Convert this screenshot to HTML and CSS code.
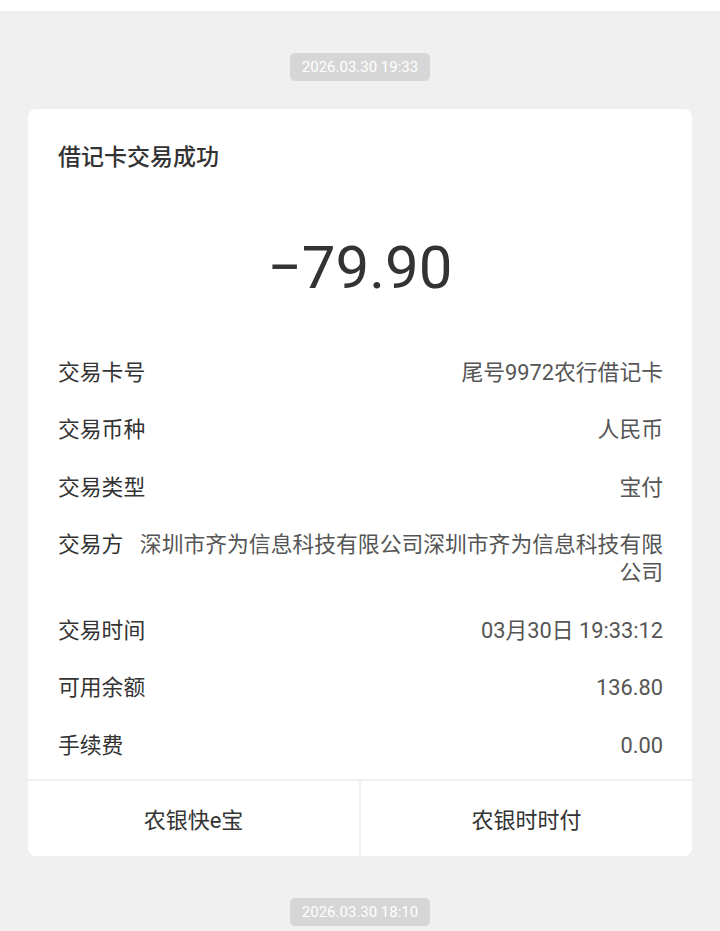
FILE: index.html
```html
<!DOCTYPE html>
<html>
<head>
<meta charset="utf-8">
<title>交易通知</title>
<link rel="stylesheet" href="styles.css">
</head>
<body>

<div class="topbar"></div>

<div class="feed">
  <div class="stamp"><span>2026.03.30 19:33</span></div>

  <div class="card">
    <div class="card-title">借记卡交易成功</div>
    <div class="amount">−79.90</div>

    <div class="rows">
      <div class="row">
        <span class="label">交易卡号</span>
        <span class="value">尾号9972农行借记卡</span>
      </div>
      <div class="row">
        <span class="label">交易币种</span>
        <span class="value">人民币</span>
      </div>
      <div class="row">
        <span class="label">交易类型</span>
        <span class="value">宝付</span>
      </div>
      <div class="row">
        <span class="label">交易方</span>
        <span class="value">深圳市齐为信息科技有限公司深圳市齐为信息科技有限公司</span>
      </div>
      <div class="row">
        <span class="label">交易时间</span>
        <span class="value">03月30日 19:33:12</span>
      </div>
      <div class="row">
        <span class="label">可用余额</span>
        <span class="value">136.80</span>
      </div>
      <div class="row">
        <span class="label">手续费</span>
        <span class="value">0.00</span>
      </div>
    </div>

    <div class="actions">
      <button class="action">农银快e宝</button>
      <button class="action">农银时时付</button>
    </div>
  </div>

  <div class="stamp"><span>2026.03.30 18:10</span></div>
</div>

</body>
</html>
```

FILE: styles.css
```css
body {
  margin: 0;
  background-color: #f0f0f0;
  font-family: Roboto, "Noto Sans CJK SC", sans-serif;
  color: #333;
}
.topbar {
  height: 11px;
  background-color: #fff;
}
.feed {
  padding: 0 28px;
}
.stamp {
  display: flex;
  justify-content: center;
  padding: 42px 0 28px;
}
.stamp span {
  background-color: #d6d6d6;
  color: #fff;
  font-size: 15px;
  line-height: 28px;
  padding: 0 12px;
  border-radius: 5px;
}
.card {
  background-color: #fff;
  border-radius: 8px;
  overflow: hidden;
}
.card-title {
  padding: 33px 30px 0;
  font-size: 23px;
  line-height: 32px;
  font-weight: 500;
  color: #333;
}
.amount {
  margin-top: 54px;
  text-align: center;
  font-size: 60px;
  line-height: 80px;
  color: #333;
}
.rows {
  margin-top: 36px;
  padding: 0 29px 4px 30px;
}
.row {
  display: flex;
  justify-content: space-between;
  align-items: flex-start;
  gap: 14px;
  padding: 14.75px 0;
  font-size: 21.8px;
  line-height: 28px;
}
.label {
  flex-shrink: 0;
  color: #333;
}
.value {
  text-align: right;
  color: #555;
}
.actions {
  display: grid;
  grid-template-columns: 1fr 1fr;
  gap: 2px;
  border-top: 2px solid #f0f0f0;
  background-color: #f0f0f0;
}
.action {
  border: none;
  background-color: #fff;
  height: 75px;
  font-family: Roboto, "Noto Sans CJK SC", sans-serif;
  font-size: 22px;
  color: #333;
  padding: 0;
}
```
